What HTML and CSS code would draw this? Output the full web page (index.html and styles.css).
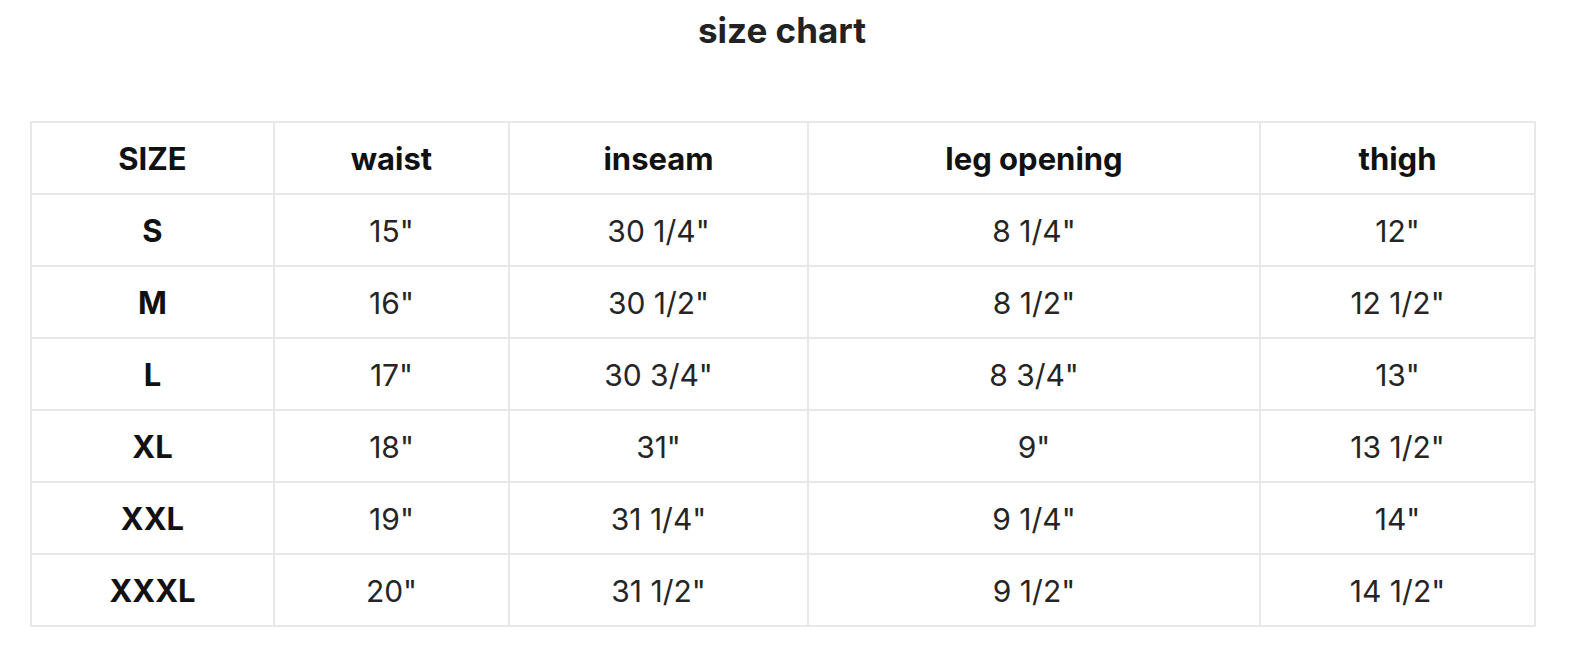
FILE: index.html
```html
<!DOCTYPE html>
<html>
<head>
<meta charset="utf-8">
<link rel="stylesheet" href="styles.css">
</head>
<body>
<div class="page">
  <h1 class="title">size chart</h1>
  <table class="chart">
    <colgroup>
      <col class="c1"><col class="c2"><col class="c3"><col class="c4"><col class="c5">
    </colgroup>
    <thead>
      <tr><th>SIZE</th><th>waist</th><th>inseam</th><th>leg opening</th><th>thigh</th></tr>
    </thead>
    <tbody>
      <tr><th>S</th><td>15"</td><td>30 1/4"</td><td>8 1/4"</td><td>12"</td></tr>
      <tr><th>M</th><td>16"</td><td>30 1/2"</td><td>8 1/2"</td><td>12 1/2"</td></tr>
      <tr><th>L</th><td>17"</td><td>30 3/4"</td><td>8 3/4"</td><td>13"</td></tr>
      <tr><th>XL</th><td>18"</td><td>31"</td><td>9"</td><td>13 1/2"</td></tr>
      <tr><th>XXL</th><td>19"</td><td>31 1/4"</td><td>9 1/4"</td><td>14"</td></tr>
      <tr><th>XXXL</th><td>20"</td><td>31 1/2"</td><td>9 1/2"</td><td>14 1/2"</td></tr>
    </tbody>
  </table>
</div>
</body>
</html>
```
FILE: styles.css
```css
html, body {
  margin: 0;
  padding: 0;
  background: #ffffff;
}
body {
  font-family: Inter, "Liberation Sans", sans-serif;
  color: #222222;
}
.page {
  width: 1504px;
  padding: 0 0 0 30px;
}
.title {
  margin: 0;
  padding-top: 8px;
  height: 121px;
  box-sizing: border-box;
  text-align: center;
  font-size: 35px;
  line-height: 44px;
  font-weight: 700;
  color: #222222;
}
.chart {
  width: 1504px;
  table-layout: fixed;
  border-collapse: collapse;
}
.c1 { width: 243px; }
.c2 { width: 235px; }
.c3 { width: 299px; }
.c4 { width: 452px; }
.c5 { width: 275px; }
.chart th, .chart td {
  border: 2px solid #e8e8e8;
  height: 68px;
  padding: 2px 0 0;
  text-align: center;
  vertical-align: middle;
  line-height: 36px;
}
.chart th {
  font-size: 31px;
  font-weight: 700;
  color: #111111;
}
.chart td {
  font-size: 30px;
  font-weight: 400;
  color: #252525;
}
```
